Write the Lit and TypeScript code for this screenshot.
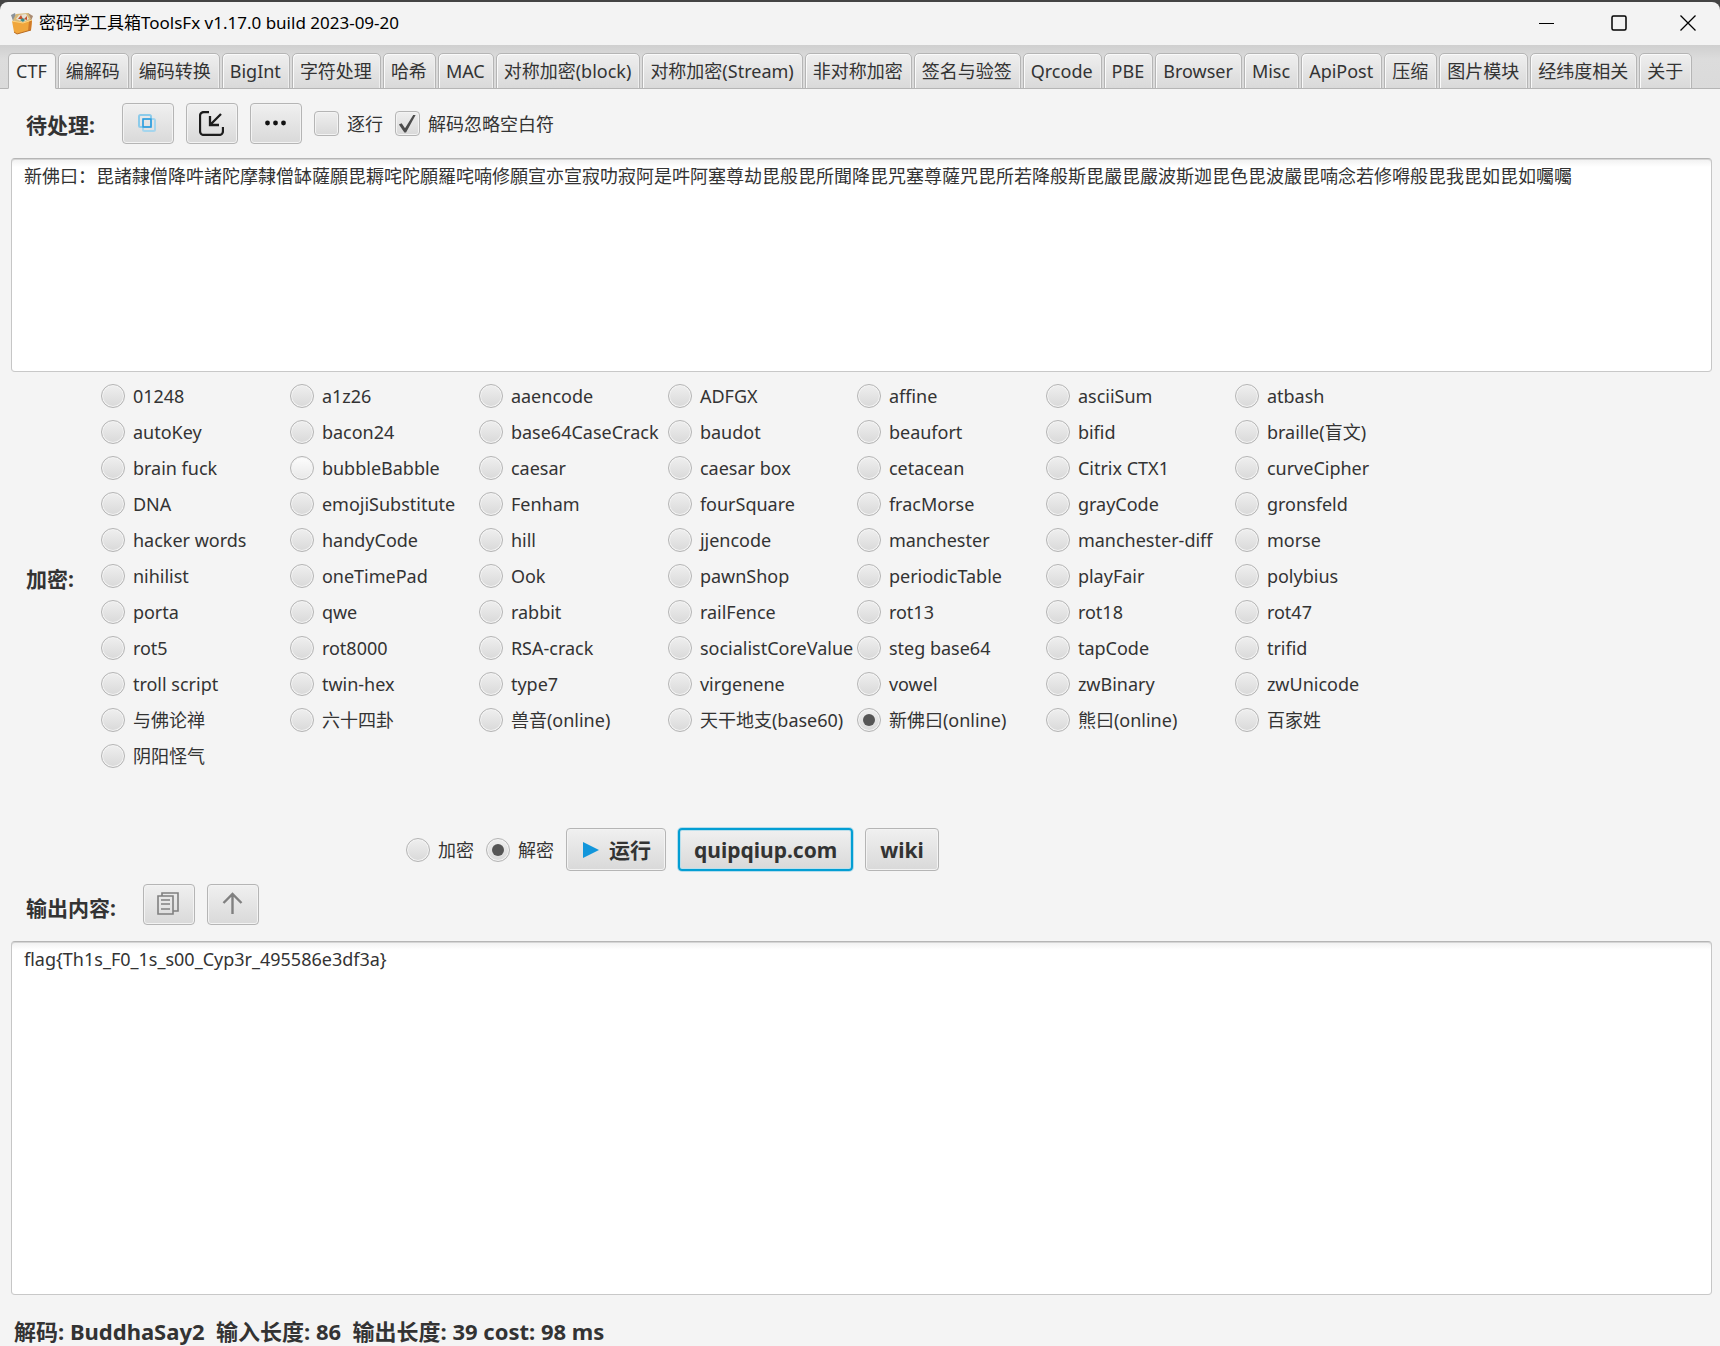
import { LitElement, html, css, svg } from "lit";
import { customElement, property, state } from "lit/decorators.js";

const TABS = ["CTF", "编解码", "编码转换", "BigInt", "字符处理", "哈希", "MAC", "对称加密(block)", "对称加密(Stream)", "非对称加密", "签名与验签", "Qrcode", "PBE", "Browser", "Misc", "ApiPost", "压缩", "图片模块", "经纬度相关", "关于"];

const CIPHERS = ["01248", "a1z26", "aaencode", "ADFGX", "affine", "asciiSum", "atbash", "autoKey", "bacon24", "base64CaseCrack", "baudot", "beaufort", "bifid", "braille(盲文)", "brain fuck", "bubbleBabble", "caesar", "caesar box", "cetacean", "Citrix CTX1", "curveCipher", "DNA", "emojiSubstitute", "Fenham", "fourSquare", "fracMorse", "grayCode", "gronsfeld", "hacker words", "handyCode", "hill", "jjencode", "manchester", "manchester-diff", "morse", "nihilist", "oneTimePad", "Ook", "pawnShop", "periodicTable", "playFair", "polybius", "porta", "qwe", "rabbit", "railFence", "rot13", "rot18", "rot47", "rot5", "rot8000", "RSA-crack", "socialistCoreValue", "steg base64", "tapCode", "trifid", "troll script", "twin-hex", "type7", "virgenene", "vowel", "zwBinary", "zwUnicode", "与佛论禅", "六十四卦", "兽音(online)", "天干地支(base60)", "新佛曰(online)", "熊曰(online)", "百家姓", "阴阳怪气"];

const INPUT_TEXT = "新佛曰：毘諸隸僧降吽諸陀摩隸僧缽薩願毘耨咤陀願羅咤喃修願宣亦宣寂叻寂阿是吽阿塞尊劫毘般毘所聞降毘咒塞尊薩咒毘所若降般斯毘嚴毘嚴波斯迦毘色毘波嚴毘喃念若修嘚般毘我毘如毘如囑囑";

@customElement("app-root")
export class AppRoot extends LitElement {
  @state() private tab = "CTF";
  @state() private cipher = "新佛曰(online)";
  @property() input = INPUT_TEXT;
  @property() output = "flag{Th1s_F0_1s_s00_Cyp3r_495586e3df3a}";

  static styles = css`
    :host {
      display: block;
      background: #444;
      color: #333;
      font: 18px/24px "Noto Sans", "Noto Sans CJK SC", sans-serif;
    }
    * { box-sizing: border-box; }
    button, input, textarea { font: inherit; color: inherit; margin: 0; }
    .window {
      display: flex;
      flex-direction: column;
      min-height: 100vh;
      border-top: 2px solid #444;
    }
    .titlebar {
      display: flex;
      align-items: center;
      gap: 2px;
      height: 43px;
      padding: 0 0 2px 10px;
      background: #f3f3f3;
      border-radius: 8px 8px 0 0;
      color: #000;
    }
    .title { flex: 1; margin: 0; padding-left: 3px; font-size: 17px; font-weight: 400; white-space: pre; }
    .winbtn { display: grid; place-items: center; width: 70px; height: 41px; padding: 0; border: 0; background: none; }
    .winbtn:last-child { width: 64px; }
    .tabs {
      display: flex;
      gap: 2px;
      height: 44px;
      padding: 8px 8px 0;
      background: linear-gradient(#cfcfcf, #dcdcdc 14px, #dadada);
      box-shadow: inset 0 -1px #b5b5b5;
    }
    .tab {
      flex: 0 0 auto;
      height: 36px;
      padding: 0 8px 0 7px;
      border: 1px solid #b5b5b5;
      border-radius: 5px 5px 0 0;
      background: linear-gradient(#efefef, #d9d9d9);
      box-shadow: inset 1px 1px #fafafa, inset -1px 0 #eee;
      white-space: nowrap;
    }
    .tab.on { background: #f4f4f4; border-bottom-color: #f4f4f4; box-shadow: none; }
    .page { flex: 1; display: flex; flex-direction: column; padding: 0 8px 0 11px; background: #f4f4f4; }
    .bar { display: flex; align-items: center; gap: 12px; padding-left: 15px; }
    .bar.top { height: 69px; }
    .bar.out { padding-top: 13px; padding-bottom: 16px; }
    .caption { margin: 0 15px 0 0; padding-top: 6px; font-size: 21px; font-weight: 700; white-space: nowrap; }
    .bar.top .caption { padding-top: 2px; }
    .btn {
      display: inline-flex;
      align-items: center;
      justify-content: center;
      gap: 10px;
      height: 43px;
      padding: 0 14px;
      border: 1px solid #b5b5b5;
      border-radius: 4px;
      background: linear-gradient(#f0f0f0, #d9d9d9);
      box-shadow: inset 0 0 0 1px #f3f3f3;
      font-size: 21px;
      font-weight: 700;
    }
    .btn.icon { width: 52px; height: 41px; padding: 0; }
    .btn.focus { border: 2px solid #039ed3; box-shadow: 0 0 0 1px #b4dcec, inset 0 0 0 1px #b9dfec; }
    .choice { display: inline-flex; align-items: center; gap: 8px; white-space: nowrap; }
    input[type="radio"], input[type="checkbox"] {
      appearance: none;
      flex: none;
      display: grid;
      place-items: center;
      width: 24px;
      height: 24px;
      border: 1px solid #b5b5b5;
      border-radius: 50%;
      background: linear-gradient(#efefef, #d9d9d9);
      box-shadow: inset 0 0 0 1px #f3f3f3;
    }
    input[type="checkbox"] { width: 25px; height: 25px; border-radius: 4px; }
    input[type="radio"].hover { background: linear-gradient(#fdfdfd, #e8e8e8); }
    input[type="radio"]:checked::before { content: ""; width: 12px; height: 12px; border-radius: 50%; background: #555; }
    input[type="checkbox"]:checked::before {
      content: "";
      width: 17px;
      height: 18px;
      background: #4c4c4c;
      clip-path: polygon(0 56%, 16% 48%, 36% 76%, 86% 0, 100% 0, 42% 100%, 32% 100%);
    }
    .text {
      display: block;
      width: 100%;
      padding: 5px 12px;
      border: 1px solid #b9b9b9;
      border-color: #b5b5b5 #c6c6c6 #c8c8c8;
      border-radius: 4px;
      background: linear-gradient(#f0f0f0, #fff 8px);
      resize: none;
      outline: none;
      box-shadow: inset 0 1px #d5d5d5;
    }
    .source { height: 214px; }
    .result { flex: 1; min-height: 200px; }
    .ciphers { display: flex; align-items: center; padding: 6px 0 0 15px; }
    .grid { display: grid; grid-template-columns: repeat(7, 189px); grid-auto-rows: 36px; margin-left: 12px; }
    .run { display: flex; align-items: center; gap: 12px; padding: 54px 0 0 395px; }
    .status { margin: 0; padding: 23px 0 2px 3px; font-size: 22px; line-height: 26px; font-weight: 700; white-space: pre; }
  `;

  private icon(name: string) {
    const art: Record<string, unknown> = {
      copy: svg`<g fill="none" stroke-width="2"><rect x="4" y="4" width="12" height="12" rx="1.5" stroke="#8ccbea"/><rect x="8" y="8" width="12" height="12" rx="1.5" stroke="#a5d5ed"/><path d="M8 8h8v8H8z" stroke="#2a9bdc" stroke-width="1.5"/></g>`,
      into: svg`<path d="M10 1H5a4 4 0 0 0-4 4v15a4 4 0 0 0 4 4h15a4 4 0 0 0 4-4v-4M22 3 12 13M11 5v9h9" fill="none" stroke="#1d1d1d" stroke-width="2.3"/>`,
      dots: svg`<g fill="#111"><circle cx="4.500" cy="12" r="2.400"/><circle cx="12.500" cy="12" r="2.400"/><circle cx="20.500" cy="12" r="2.400"/></g>`,
      pages: svg`<g fill="none" stroke="#808080" stroke-width="1.6"><path d="M2 4h15v18H2zM6 4V1h16v18h-5M5 8h9M5 12h9M5 17h9"/></g>`,
      up: svg`<path d="M12.500 22V3M3.500 11l9-9 9 9" fill="none" stroke="#808080" stroke-width="2.400"/>`,
      play: svg`<path d="M2 1l16 8-16 8z" fill="#1296db"/>`,
    };
    const s = name === "play" ? 18 : 25;
    return svg`<svg width=${s} height=${s} viewBox="0 0 ${s} ${s}" aria-hidden="true">${art[name]}</svg>`;
  }

  render() {
    return html`
      <div class="window">
        <header class="titlebar">
          <svg width="24" height="24" viewBox="0 0 24 24" aria-hidden="true">
            <path d="M1 4l4-2 2 6-4 2z" fill="#8a9299"/><path d="M18 2l5 3-2 5-4-2z" fill="#a98a72"/>
            <path d="M3 9l3-6 12-1 3 6-8 7z" fill="#d8b878"/><path d="M6 8l3-4 7-1 3 5-6 3z" fill="#e6e2d6"/>
            <path d="M8 8l3-4 2 4zM14 8l3-3v4z" fill="#c4502c"/><path d="M10 9l3-2 2 2-2 2z" fill="#3f8a86"/>
            <path d="M2 10l11 2 9-3-1 10-14 4-3-2z" fill="#f0a63c"/><path d="M19 10l3-1-1 10-3 1z" fill="#cf7a28"/>
            <path d="M2 10l11 2 9-3" fill="none" stroke="#ffd27a"/><path d="M4 21l3 2 14-4" fill="none" stroke="#b96a20"/>
          </svg>
          <h1 class="title">密码学工具箱ToolsFx v1.17.0 build 2023-09-20</h1>
          <button class="winbtn" aria-label="最小化"><svg width="16" height="16"><path d="M0 8.500h15" stroke="#000"/></svg></button>
          <button class="winbtn" aria-label="最大化"><svg width="16" height="16"><rect x="1" y="1" width="14" height="14" rx="1.500" fill="none" stroke="#000" stroke-width="1.500"/></svg></button>
          <button class="winbtn" aria-label="关闭"><svg width="16" height="16"><path d="M.5 .5l15 15M15.500 .5l-15 15" stroke="#000" stroke-width="1.300"/></svg></button>
        </header>
        <nav class="tabs" role="tablist">
          ${TABS.map((t) => html`<button role="tab" class="tab ${t === this.tab ? "on" : ""}" aria-selected=${t === this.tab} @click=${() => (this.tab = t)}>${t}</button>`)}
        </nav>
        <main class="page">
          <div class="bar top">
            <label class="caption" for="src">待处理:</label>
            <button class="btn icon" aria-label="复制">${this.icon("copy")}</button>
            <button class="btn icon" aria-label="导入">${this.icon("into")}</button>
            <button class="btn icon" aria-label="更多">${this.icon("dots")}</button>
            <label class="choice"><input type="checkbox" />逐行</label>
            <label class="choice"><input type="checkbox" checked />解码忽略空白符</label>
          </div>
          <textarea id="src" class="text source" spellcheck="false" .value=${this.input}></textarea>
          <section class="ciphers">
            <h2 class="caption">加密:</h2>
            <div class="grid">
              ${CIPHERS.map((c) => html`<label class="choice"><input type="radio" name="cipher" class=${c === "bubbleBabble" ? "hover" : ""} .checked=${c === this.cipher} @change=${() => (this.cipher = c)} />${c}</label>`)}
            </div>
          </section>
          <div class="run">
            <label class="choice"><input type="radio" name="mode" />加密</label>
            <label class="choice"><input type="radio" name="mode" checked />解密</label>
            <button class="btn">${this.icon("play")}运行</button>
            <button class="btn focus">quipqiup.com</button>
            <button class="btn">wiki</button>
          </div>
          <div class="bar out">
            <label class="caption" for="dst">输出内容:</label>
            <button class="btn icon" aria-label="复制结果">${this.icon("pages")}</button>
            <button class="btn icon" aria-label="上移">${this.icon("up")}</button>
          </div>
          <textarea id="dst" class="text result" spellcheck="false" .value=${this.output}></textarea>
          <p class="status">解码: BuddhaSay2  输入长度: 86  输出长度: 39 cost: 98 ms</p>
        </main>
      </div>
    `;
  }
}
